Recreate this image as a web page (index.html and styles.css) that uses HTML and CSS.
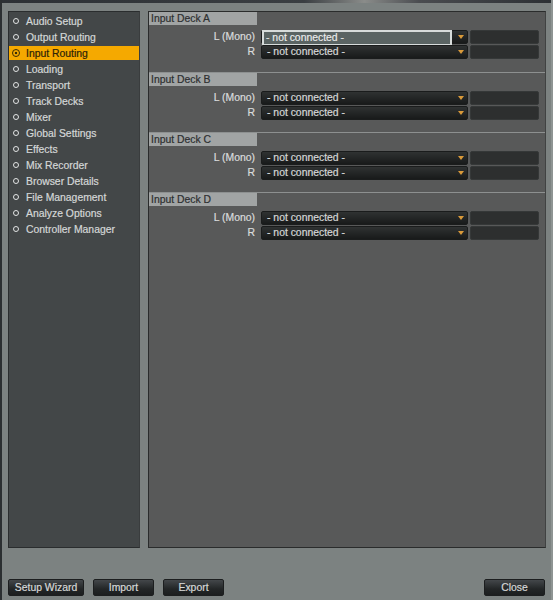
FILE: index.html
```html
<!DOCTYPE html>
<html>
<head>
<meta charset="utf-8">
<link rel="stylesheet" href="styles.css">
</head>
<body>
<div class="window">
  <div class="topstrip"></div>
  <div class="content">
    <ul class="sidebar">
      <li class="item"><span class="dot"></span>Audio Setup</li>
      <li class="item"><span class="dot"></span>Output Routing</li>
      <li class="item active"><span class="dot"></span>Input Routing</li>
      <li class="item"><span class="dot"></span>Loading</li>
      <li class="item"><span class="dot"></span>Transport</li>
      <li class="item"><span class="dot"></span>Track Decks</li>
      <li class="item"><span class="dot"></span>Mixer</li>
      <li class="item"><span class="dot"></span>Global Settings</li>
      <li class="item"><span class="dot"></span>Effects</li>
      <li class="item"><span class="dot"></span>Mix Recorder</li>
      <li class="item"><span class="dot"></span>Browser Details</li>
      <li class="item"><span class="dot"></span>File Management</li>
      <li class="item"><span class="dot"></span>Analyze Options</li>
      <li class="item"><span class="dot"></span>Controller Manager</li>
    </ul>
    <div class="main">
      <section class="deck first">
        <div class="deck-head">Input Deck A</div>
        <div class="row">
          <span class="label">L (Mono)</span>
          <div class="select"><span class="val">- not connected -</span><span class="arrow"></span><span class="focus">- not connected -</span></div>
          <div class="extra"></div>
        </div>
        <div class="row">
          <span class="label">R</span>
          <div class="select"><span class="val">- not connected -</span><span class="arrow"></span></div>
          <div class="extra"></div>
        </div>
      </section>
      <section class="deck">
        <div class="deck-head">Input Deck B</div>
        <div class="row">
          <span class="label">L (Mono)</span>
          <div class="select"><span class="val">- not connected -</span><span class="arrow"></span></div>
          <div class="extra"></div>
        </div>
        <div class="row">
          <span class="label">R</span>
          <div class="select"><span class="val">- not connected -</span><span class="arrow"></span></div>
          <div class="extra"></div>
        </div>
      </section>
      <section class="deck">
        <div class="deck-head">Input Deck C</div>
        <div class="row">
          <span class="label">L (Mono)</span>
          <div class="select"><span class="val">- not connected -</span><span class="arrow"></span></div>
          <div class="extra"></div>
        </div>
        <div class="row">
          <span class="label">R</span>
          <div class="select"><span class="val">- not connected -</span><span class="arrow"></span></div>
          <div class="extra"></div>
        </div>
      </section>
      <section class="deck">
        <div class="deck-head">Input Deck D</div>
        <div class="row">
          <span class="label">L (Mono)</span>
          <div class="select"><span class="val">- not connected -</span><span class="arrow"></span></div>
          <div class="extra"></div>
        </div>
        <div class="row">
          <span class="label">R</span>
          <div class="select"><span class="val">- not connected -</span><span class="arrow"></span></div>
          <div class="extra"></div>
        </div>
      </section>
    </div>
  </div>
  <div class="footer">
    <button class="btn w-wizard">Setup Wizard</button>
    <button class="btn w-small">Import</button>
    <button class="btn w-small">Export</button>
    <span class="spacer"></span>
    <button class="btn w-small">Close</button>
  </div>
</div>
</body>
</html>
```
FILE: styles.css
```css
* { box-sizing: border-box; }
html, body { margin: 0; padding: 0; }
body {
  width: 553px;
  height: 600px;
  overflow: hidden;
  background: #7c8281;
  font-family: "Liberation Sans", Arial, sans-serif;
  font-size: 10.4px;
  font-weight: normal;
}
.window {
  width: 553px;
  height: 600px;
  display: flex;
  flex-direction: column;
  border-left: 2px solid #2b2f31;
  border-right: 2px solid #8e9493;
  background: #7c8281;
}
.topstrip {
  height: 3px;
  background: linear-gradient(90deg, #2c3034 0%, #3a3e42 55%, #8a8c8a 66%, #4a4c50 76%, #2c3034 100%);
}
.content {
  display: flex;
  gap: 8px;
  padding: 8px 0 0 6px;
  height: 545px;
}
.sidebar {
  list-style: none;
  margin: 0;
  width: 132px;
  height: 537px;
  padding: 2px 0 0 0;
  background: #434748;
  border: 1px solid #2a2d2e;
  border-right-color: #3a3d3e;
}
.item {
  height: 14px;
  margin-bottom: 2px;
  display: flex;
  align-items: center;
  padding-left: 3px;
  color: #d4d7d7;
  white-space: nowrap;
  -webkit-text-stroke: 0.2px #d4d7d7;
}
.item .dot {
  width: 6px;
  height: 6px;
  border-radius: 50%;
  border: 1.5px solid #e2e4e4;
  margin-right: 7px;
  margin-left: 1px;
  flex: none;
}
.item.active {
  background: #f5a900;
  color: #2a2208;
  -webkit-text-stroke: 0.2px #2a2208;
}
.item.active .dot {
  width: 8px;
  height: 8px;
  margin-left: 0;
  margin-right: 6px;
  border: 1.5px solid #3a2c05;
  background: radial-gradient(circle, #3a2c05 0 1.3px, #f5a900 1.6px);
}
.main {
  width: 398px;
  height: 537px;
  background: #585959;
  border: 1px solid #2a2c2c;
  border-right-color: #404242;
}
.deck {
  border-top: 1px solid #8d9090;
  padding-bottom: 12px;
}
.deck.first {
  border-top: none;
  padding-bottom: 13px;
}
.deck-head {
  width: 108px;
  height: 13px;
  line-height: 13px;
  padding-left: 2px;
  background: #a1a4a4;
  color: #2d2f30;
  margin-bottom: 4px;
  -webkit-text-stroke: 0.2px #2d2f30;
}
.row {
  display: flex;
  align-items: center;
  height: 15px;
}
.label {
  width: 106px;
  text-align: right;
  color: #dadcdc;
  margin-right: 6px;
  -webkit-text-stroke: 0.2px #dadcdc;
}
.select {
  position: relative;
  width: 207px;
  height: 14px;
  border-radius: 2px;
  background: linear-gradient(#2f3232, #181a1a);
  border: 1px solid #1a1c1c;
  display: flex;
  align-items: center;
  padding-left: 5px;
  color: #d5d7d7;
  -webkit-text-stroke: 0.2px #d5d7d7;
}
.val { flex: 1; }
.arrow {
  width: 0;
  height: 0;
  border-left: 3.5px solid transparent;
  border-right: 3.5px solid transparent;
  border-top: 4px solid #d99a3a;
  margin-right: 3px;
}
.focus {
  position: absolute;
  left: 0;
  top: -1px;
  width: 190px;
  height: 16px;
  background: #5a6463;
  border: 2px solid #d7dcdb;
  color: #f2f4f4;
  padding-left: 2px;
  line-height: 12px;
}
.extra {
  width: 69px;
  height: 14px;
  margin-left: 2px;
  border-radius: 2px;
  background: #2d2f2f;
  border: 1px solid #353838;
}
.footer {
  display: flex;
  align-items: center;
  padding: 31px 6px 0 6px;
  gap: 9px;
}
.spacer { flex: 1; }
.btn {
  height: 17px;
  border-radius: 2px;
  border: 1px solid #1c1e1f;
  background: linear-gradient(#43474a, #232627 60%, #1c1e1f);
  color: #d6d8d8;
  font-family: "Liberation Sans", Arial, sans-serif;
  font-size: 10.4px;
  font-weight: normal;
  -webkit-text-stroke: 0.2px #d6d8d8;
  padding: 0;
}
.w-wizard { width: 76px; }
.w-small { width: 61px; }
```
